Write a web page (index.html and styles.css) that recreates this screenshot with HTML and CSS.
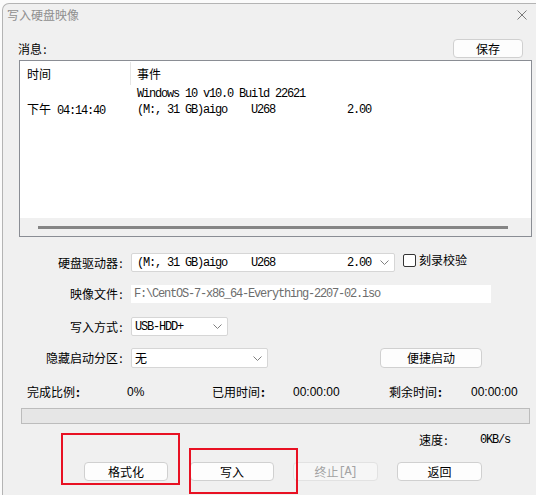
FILE: index.html
```html
<!DOCTYPE html>
<html lang="zh-CN">
<head>
<meta charset="utf-8">
<title>写入硬盘映像</title>
<link rel="stylesheet" href="styles.css">
</head>
<body>
<div class="window">
  <div class="titlebar">
    <span class="title">写入硬盘映像</span>
    <svg class="close" width="10" height="10" viewBox="0 0 10 10"><path d="M0.5 0.5 L9.5 9.5 M9.5 0.5 L0.5 9.5" stroke="#7a7a7a" stroke-width="1" fill="none"/></svg>
  </div>

  <div class="msg-row">
    <span class="label">消息<span class="colon">:</span></span>
    <button class="btn btn-save">保存</button>
  </div>

  <div class="list">
    <div class="list-body">
      <div class="list-head">
        <div class="col1">时间</div>
        <div class="col2 head2">事件</div>
      </div>
      <div class="list-row">
        <div class="col1"></div>
        <div class="col2 mono">Windows 10 v10.0 Build 22621</div>
      </div>
      <div class="list-row">
        <div class="col1 mono"><span class="cjk">下午</span> 04:14:40</div>
        <div class="col2 mono">(M:, 31 GB)aigo    U268            2.00</div>
      </div>
    </div>
    <div class="hscroll"><div class="thumb"></div></div>
  </div>

  <div class="form">
    <div class="frow r1">
      <span class="flabel">硬盘驱动器<span class="colon">:</span></span>
      <div class="combo c-drive"><span class="mono">(M:, 31 GB)aigo    U268            2.00</span><svg class="chev" width="9" height="5" viewBox="0 0 9 5"><path d="M0.5 0.5 L4.5 4.5 L8.5 0.5" fill="none" stroke="#808080"/></svg></div>
      <label class="check"><span class="box"></span><span>刻录校验</span></label>
    </div>
    <div class="frow r2">
      <span class="flabel">映像文件<span class="colon">:</span></span>
      <div class="field mono">F:\CentOS-7-x86_64-Everything-2207-02.iso</div>
    </div>
    <div class="frow r3">
      <span class="flabel">写入方式<span class="colon">:</span></span>
      <div class="combo c-mode"><span class="mono">USB-HDD+</span><svg class="chev" width="9" height="5" viewBox="0 0 9 5"><path d="M0.5 0.5 L4.5 4.5 L8.5 0.5" fill="none" stroke="#808080"/></svg></div>
    </div>
    <div class="frow r4">
      <span class="flabel">隐藏启动分区<span class="colon">:</span></span>
      <div class="combo c-hide"><span>无</span><svg class="chev" width="9" height="5" viewBox="0 0 9 5"><path d="M0.5 0.5 L4.5 4.5 L8.5 0.5" fill="none" stroke="#808080"/></svg></div>
      <button class="btn btn-quick">便捷启动</button>
    </div>
  </div>

  <div class="stats">
    <span class="s1">完成比例<span class="colon bold">:</span></span>
    <span class="s2 num">0%</span>
    <span class="s3">已用时间<span class="colon bold">:</span></span>
    <span class="s4 num">00:00:00</span>
    <span class="s5">剩余时间<span class="colon bold">:</span></span>
    <span class="s6 num">00:00:00</span>
  </div>

  <div class="progress"></div>

  <div class="speed">
    <span class="sp-label">速度<span class="colon">:</span></span>
    <span class="mono">0KB/s</span>
  </div>

  <div class="actions">
    <button class="btn b-format">格式化</button>
    <button class="btn b-write">写入</button>
    <button class="btn b-stop" disabled>终止<span class="mono">[A]</span></button>
    <button class="btn b-back">返回</button>
  </div>
</div>

<div class="mark mark1"></div>
<div class="mark mark2"></div>
</body>
</html>
```

FILE: styles.css
```css
* { box-sizing: border-box; }

html, body {
  margin: 0;
  padding: 0;
  width: 536px;
  height: 495px;
  overflow: hidden;
  background: #fbfbfb;
  font-family: "Noto Sans CJK SC", "Noto Sans", sans-serif;
  font-size: 12px;
  font-weight: 400;
  color: #000;
}

.window {
  margin: 3px 0 0 2px;
  width: 534px;
  height: 492px;
  background: #f0f0f0;
  border-top: 1px solid #b4b4b4;
  border-left: 1px solid #b4b4b4;
  border-top-left-radius: 7px;
  position: relative;
}

.titlebar {
  height: 22px;
  display: flex;
  align-items: center;
  padding-left: 4px;
  padding-right: 9px;
}
.title { color: #8f8f8f; line-height: 16px; }
.close { margin-left: auto; display: block; }

.colon {
  display: inline-block;
  width: 6px;
  text-align: center;
}
.bold { font-weight: 700; }

.msg-row {
  margin: 13px 0 0 15px;
  width: 505px;
  height: 19px;
  display: flex;
  align-items: center;
}
.label { line-height: 16px; }

.btn {
  font-family: "Noto Sans CJK SC", sans-serif;
  font-size: 12px;
  font-weight: 400;
  color: #000;
  background: #fdfdfd;
  border: 1px solid #d0d0d0;
  border-radius: 4px;
  height: 19px;
  padding: 0;
  line-height: 16px;
  display: flex;
  align-items: center;
  justify-content: center;
}
.btn-save { margin-left: auto; width: 70px; }

.list {
  margin: 2px 0 0 16px;
  width: 513px;
  height: 177px;
  background: #fff;
  border: 1px solid #8a8d94;
  display: flex;
  flex-direction: column;
}
.list-body { flex: 1; }
.list-head {
  height: 25px;
  display: flex;
  align-items: center;
}
.list-row {
  height: 16px;
  display: flex;
  align-items: center;
}
.col1 { width: 110px; padding-left: 7px; line-height: 16px; }
.col2 { padding-left: 7px; line-height: 16px; }
.head2 {
  border-left: 1px solid #e5e5e5;
  height: 23px;
  display: flex;
  align-items: center;
  padding-left: 6px;
}

.mono {
  font-family: "Liberation Mono", "Noto Sans CJK SC", monospace;
  font-size: 12px;
  font-weight: 400;
  letter-spacing: -1.2px;
  white-space: pre;
}
.cjk {
  font-family: "Noto Sans CJK SC", sans-serif;
  letter-spacing: 0;
}

.hscroll {
  height: 18px;
  background: #f0f0f0;
  display: flex;
  align-items: center;
  padding: 0 23px 0 18px;
}
.thumb { flex: 1; height: 3px; background: #858585; }

.form { margin: 16px 0 0 16px; }
.frow { display: flex; align-items: center; }
.r2 { margin-top: 13px; }
.r3 { margin-top: 14px; }
.r4 { margin-top: 12px; }
.flabel {
  width: 108px;
  text-align: right;
  padding-right: 3px;
  line-height: 16px;
}

.combo {
  margin-left: 4px;
  height: 19px;
  background: #fff;
  border: 1px solid #d6d6d6;
  border-radius: 2px;
  display: flex;
  align-items: center;
  justify-content: space-between;
  padding: 0 5px 0 5px;
  line-height: 16px;
}
.chev { display: block; }
.c-drive { width: 264px; }
.c-mode { width: 97px; padding-left: 3px; }
.c-hide { width: 137px; height: 20px; padding-left: 3px; }

.check {
  margin-left: 8px;
  display: flex;
  align-items: center;
  align-self: flex-start;
  gap: 3px;
  line-height: 14px;
}
.box {
  width: 13px;
  height: 13px;
  border: 1px solid #333;
  border-radius: 2px;
  background: #fff;
}

.field {
  margin-left: 4px;
  width: 360px;
  height: 18px;
  background: #fff;
  color: #6d6d6d;
  padding-left: 3px;
  line-height: 18px;
}

.btn-quick { margin-left: 112px; width: 102px; height: 20px; }

.stats {
  margin: 16px 0 0 24px;
  height: 16px;
  display: flex;
  align-items: center;
  line-height: 16px;
}
.s1 { width: 100px; }
.s2 { width: 85px; }
.s3 { width: 81px; }
.s4 { width: 96px; }
.s5 { width: 82px; }
.num { font-family: "Liberation Sans", sans-serif; font-size: 12px; }

.progress {
  margin: 8px 0 0 18px;
  width: 509px;
  height: 16px;
  background: #e6e6e6;
  border: 1px solid #bcbcbc;
}

.speed {
  margin: 8px 0 0 416px;
  height: 16px;
  display: flex;
  align-items: center;
  line-height: 16px;
}
.sp-label { width: 61px; }

.actions {
  margin: 14px 0 0 81px;
  display: flex;
}
.b-format { width: 84px; }
.b-write { width: 84px; margin-left: 22px; }
.b-stop {
  width: 85px;
  margin-left: 19px;
  color: #a3a3a3;
  background: #f6f6f6;
  border-color: #e2e2e2;
}
.b-back { width: 85px; margin-left: 19px; }

.mark {
  position: absolute;
  border: 2px solid #e81123;
}
.mark1 { left: 61px; top: 433px; width: 119px; height: 52px; }
.mark2 { left: 189px; top: 448px; width: 109px; height: 46px; }
```
